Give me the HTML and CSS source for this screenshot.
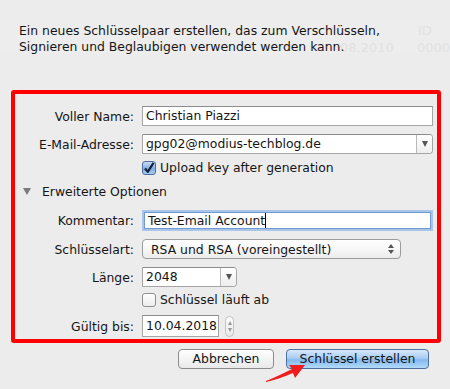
FILE: index.html
```html
<!DOCTYPE html>
<html>
<head>
    <title>Neues Schlüsselpaar</title>
    <meta http-equiv="Content-Type" content="text/html; charset=utf-8">
    <link rel="stylesheet" href="styles.css">
</head>
<body>

<div class="sheet">

    <div class="intro">
        <p class="intro-text">Ein neues Schlüsselpaar erstellen, das zum Verschlüsseln,<br>Signieren und Beglaubigen verwendet werden kann.</p>
        <div class="ghost">
            <span class="ghost-id">ID</span>
            <span class="ghost-date">08.2010</span>
            <span class="ghost-num">0000</span>
        </div>
    </div>

    <div class="panel">
        <div class="row r-name">
            <span class="label">Voller Name:</span>
            <div class="field">Christian Piazzi</div>
        </div>

        <div class="row r-mail">
            <span class="label">E-Mail-Adresse:</span>
            <div class="combo">
                <span class="combo-text">gpg02@modius-techblog.de</span>
                <span class="combo-btn"><span class="tri-down"></span></span>
            </div>
        </div>

        <div class="row r-upload">
            <span></span>
            <div class="check-line">
                <span class="checkbox checked">
                    <svg width="12" height="12" viewBox="0 0 12 12"><path d="M2 6.5 L4.8 9.8 L10.5 0.8" fill="none" stroke="#16213a" stroke-width="2.2" stroke-linejoin="round"/></svg>
                </span>
                <span>Upload key after generation</span>
            </div>
        </div>

        <div class="disclosure">
            <span class="disc-tri"></span>
            <span>Erweiterte Optionen</span>
        </div>

        <div class="row r-comment">
            <span class="label">Kommentar:</span>
            <div class="field focused">Test-Email Account<span class="caret"></span></div>
        </div>

        <div class="row r-type">
            <span class="label">Schlüsselart:</span>
            <div class="popup">
                <span>RSA und RSA (voreingestellt)</span>
                <span class="updown"><span class="tri-up small"></span><span class="tri-down small"></span></span>
            </div>
        </div>

        <div class="row r-len">
            <span class="label">Länge:</span>
            <div class="combo short">
                <span class="combo-text">2048</span>
                <span class="combo-btn"><span class="tri-down"></span></span>
            </div>
        </div>

        <div class="row r-expire">
            <span></span>
            <div class="check-line">
                <span class="checkbox"></span>
                <span>Schlüssel läuft ab</span>
            </div>
        </div>

        <div class="row r-date">
            <span class="label">Gültig bis:</span>
            <div class="date-line">
                <div class="field date">10.04.2018</div>
                <span class="stepper"><span class="tri-up tiny"></span><span class="tri-down tiny"></span></span>
            </div>
        </div>
    </div>

    <div class="buttons">
        <span class="btn">Abbrechen</span>
        <span class="btn default">Schlüssel erstellen</span>
    </div>

    <!-- roter Pfeil auf den Button -->
    <svg class="arrow" width="50" height="30" viewBox="0 0 50 30">
        <path d="M4 25 C 14 21, 22 17, 30 13 L 27 9 L 43 9 L 33 22 L 31 17 C 22 21, 13 24, 4 26 Z" fill="#ee1c1c"/>
    </svg>

</div>

</body>
</html>
```

FILE: styles.css
```css
body, html {
    margin: 0;
    padding: 0;
    background-color: #ececec;
    font-family: 'DejaVu Sans', 'Liberation Sans', sans-serif;
    font-size: 12.4px;
    color: #151515;
}

.sheet {
    position: relative;
    width: 450px;
    height: 389px;
    overflow: hidden;
}

.intro {
    position: relative;
    height: 55px;
    margin-bottom: 35px;
}

.intro-text {
    position: relative;
    margin: 0;
    padding: 23px 0 0 19px;
    line-height: 16px;
    z-index: 1;
}

/* verschwommene Tabelle im Hintergrund */
.ghost {
    position: absolute;
    left: 0;
    top: 20px;
    width: 450px;
    height: 34px;
    background-color: #ededed;
    color: #e1e1e1;
    font-size: 13px;
}

.ghost-id {
    position: absolute;
    left: 418px;
    top: 3px;
}

.ghost-date {
    position: absolute;
    left: 340px;
    top: 20px;
}

.ghost-num {
    position: absolute;
    left: 417px;
    top: 20px;
}

.panel {
    margin-left: 11px;
    width: 418px;
    border: 4px solid #ff0000;
    border-radius: 3px;
    padding: 12px 4px 2px 0;
}

.row {
    display: grid;
    grid-template-columns: 119px 1fr;
    column-gap: 8px;
    align-items: center;
}

.label {
    text-align: right;
    white-space: nowrap;
}

.r-name    { height: 20px; }
.r-mail    { height: 20px; margin-top: 8px; }
.r-upload  { height: 15px; margin-top: 6px; }
.r-comment { height: 21px; margin-top: 12px; }
.r-type    { height: 20px; margin-top: 8px; }
.r-len     { height: 20px; margin-top: 8px; }
.r-expire  { height: 14px; margin-top: 5px; }
.r-date    { height: 22px; margin-top: 9px; }

.field {
    height: 18px;
    line-height: 18px;
    padding-left: 3px;
    background-color: #fff;
    border: 1px solid #a5a5a5;
    border-top-color: #8c8c8c;
    white-space: nowrap;
}

.field.focused {
    height: 15px;
    line-height: 15px;
    margin: 0 2px;
    border-color: #6f9ad3;
    box-shadow: 0 0 0 2px #a9c6e8;
}

.caret {
    display: inline-block;
    width: 1px;
    height: 15px;
    background-color: #000;
    vertical-align: top;
}

.combo {
    display: flex;
    height: 18px;
    background-color: #fff;
    border: 1px solid #a5a5a5;
    border-top-color: #8c8c8c;
    border-radius: 0 4px 4px 0;
}

.combo.short {
    width: 93px;
}

.combo-text {
    flex: 1;
    line-height: 18px;
    padding-left: 3px;
    white-space: nowrap;
    overflow: hidden;
}

.combo-btn {
    width: 15px;
    display: flex;
    align-items: center;
    justify-content: center;
    border-left: 1px solid #b9b9b9;
    border-radius: 0 3px 3px 0;
    background: linear-gradient(#ffffff, #eeeeee);
}

.tri-down, .tri-up {
    width: 0;
    height: 0;
    border-left: 3.5px solid transparent;
    border-right: 3.5px solid transparent;
}

.tri-down { border-top: 6px solid #555; }
.tri-up { border-bottom: 6px solid #555; }

.tri-down.small { border-top-width: 4px; border-left-width: 3px; border-right-width: 3px; margin-top: 2px; }
.tri-up.small { border-bottom-width: 4px; border-left-width: 3px; border-right-width: 3px; }

.tri-down.tiny { border-top: 4px solid #999; border-left-width: 2.5px; border-right-width: 2.5px; margin-top: 3px; }
.tri-up.tiny { border-bottom: 4px solid #999; border-left-width: 2.5px; border-right-width: 2.5px; }

.check-line {
    display: flex;
    align-items: center;
    gap: 4px;
    white-space: nowrap;
}

.checkbox {
    box-sizing: border-box;
    width: 14px;
    height: 14px;
    border: 1px solid #8f8f8f;
    border-radius: 3px;
    background: linear-gradient(#ffffff, #ececec);
    display: flex;
    align-items: center;
    justify-content: center;
}

.checkbox.checked {
    border-color: #4d6f9e;
    background: linear-gradient(#c9def5, #7eaee2 55%, #a6cdf2);
}

.disclosure {
    display: flex;
    align-items: center;
    height: 14px;
    margin-top: 9px;
    padding-left: 8px;
    gap: 11px;
}

.disc-tri {
    width: 0;
    height: 0;
    border-left: 4.5px solid transparent;
    border-right: 4.5px solid transparent;
    border-top: 7px solid #7b7b7b;
}

.popup {
    box-sizing: border-box;
    width: 259px;
    height: 20px;
    display: flex;
    align-items: center;
    justify-content: space-between;
    padding: 0 6px 0 8px;
    border: 1px solid #9c9c9c;
    border-radius: 4px;
    background: linear-gradient(#ffffff, #f7f7f7 50%, #ececec);
}

.updown {
    display: flex;
    flex-direction: column;
    align-items: center;
}

.date-line {
    display: flex;
    align-items: center;
    gap: 6px;
}

.field.date {
    width: 72px;
    height: 20px;
    line-height: 20px;
}

.stepper {
    box-sizing: border-box;
    width: 9px;
    height: 21px;
    border: 1px solid #c3c3c3;
    border-radius: 5px;
    background: linear-gradient(#fbfbfb, #eaeaea);
    display: flex;
    flex-direction: column;
    align-items: center;
    justify-content: center;
}

.buttons {
    display: flex;
    justify-content: flex-end;
    gap: 12px;
    margin-top: 6px;
    padding-right: 21px;
}

.btn {
    box-sizing: border-box;
    height: 20px;
    line-height: 18px;
    text-align: center;
    border: 1px solid #8b8b8b;
    border-radius: 4px;
    background: linear-gradient(#ffffff, #f4f4f4 50%, #e9e9e9);
    width: 96px;
}

.btn.default {
    width: 143px;
    border-color: #4f6f9f;
    background: linear-gradient(#d7e8fb, #a9cdf4 45%, #84b9ee 55%, #b3dafa);
}

.arrow {
    position: absolute;
    left: 262px;
    top: 356px;
}
```
